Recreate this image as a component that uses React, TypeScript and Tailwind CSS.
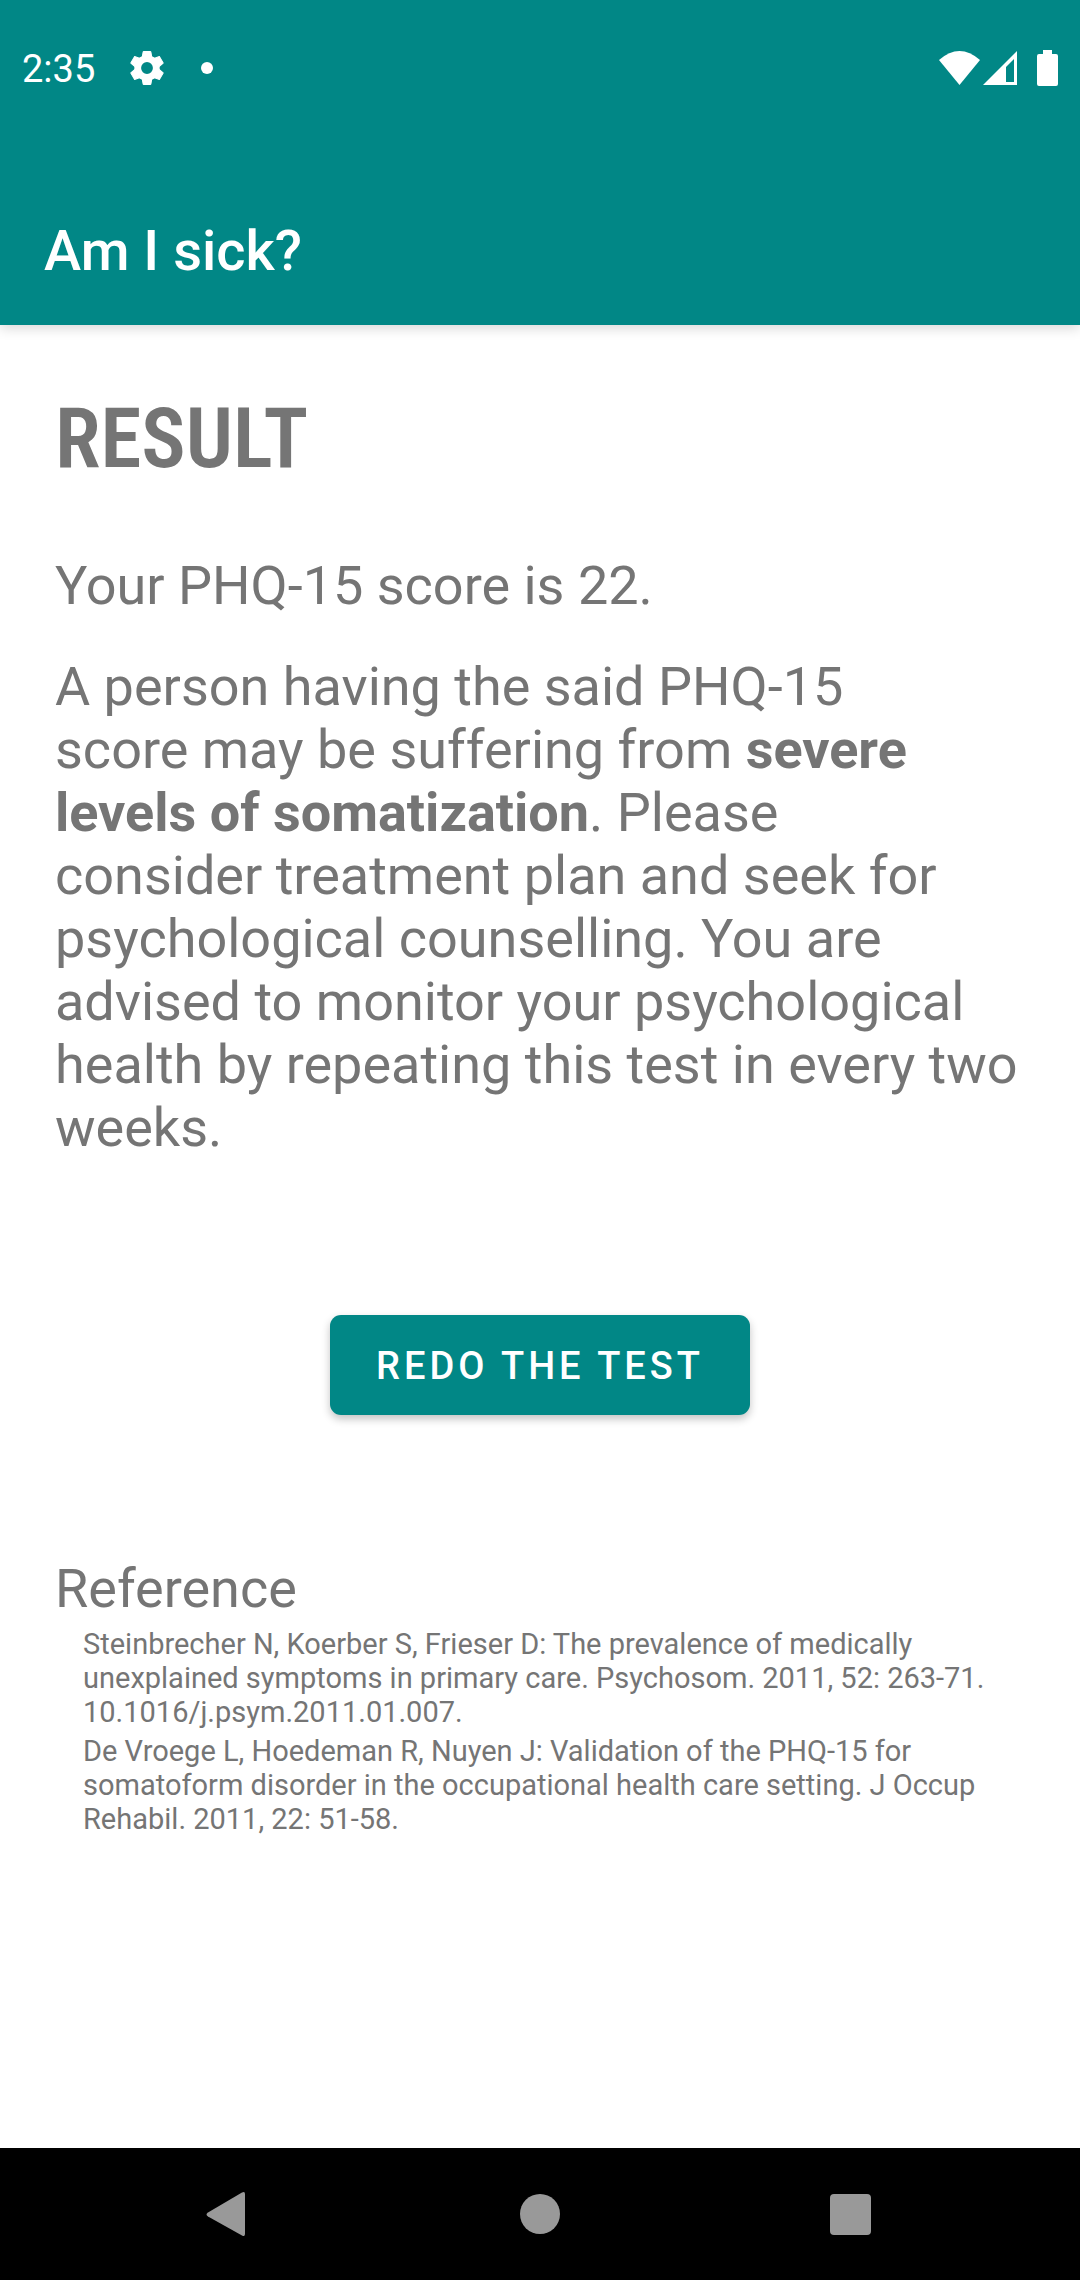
const gearTeeth = [0, 60, 120, 180, 240, 300]

export default function App() {
  return (
    <div className="flex min-h-screen flex-col bg-white font-[Roboto,sans-serif] text-[#757575]">
      <header className="bg-[#018786] text-white shadow-[0_3px_12px_rgba(0,0,0,0.16)]">
        <div className="flex h-[136px] items-center justify-between px-[22px]">
          <div className="flex items-center">
            <span className="pt-0.5 text-[38px] leading-[48px]">2:35</span>
            <svg className="ml-8 size-10" viewBox="0 0 40 40" fill="currentColor" aria-label="Settings">
              <circle cx="20" cy="20" r="9.300" fill="none" stroke="currentColor" strokeWidth="6.800" />
              {gearTeeth.map((angle) => (
                <path key={angle} d="M16.200 3.500H23.800L25.200 11.500H14.800Z" stroke="currentColor" strokeWidth="1" strokeLinejoin="round" transform={`rotate(${angle} 20 20)`} />
              ))}
            </svg>
            <span className="ml-[34px] size-3 rounded-full bg-white" />
          </div>
          <div className="flex items-center">
            <svg className="h-[34px] w-[41px]" viewBox="0 0 41 34" fill="currentColor" aria-label="Wi-Fi"><path d="M0 9Q20.500-9 41 9L20.500 34Z" /></svg>
            <svg className="ml-[3px] size-[34px]" viewBox="0 0 34 34" fill="currentColor" aria-label="Signal"><path fillRule="evenodd" d="M34 0V34H0ZM31 8L23 16V31H31Z" /></svg>
            <svg className="ml-5 h-9 w-[21px]" viewBox="0 0 21 36" fill="currentColor" aria-label="Battery"><path d="M6 0h9v4h4q2 0 2 2v28q0 2-2 2H2q-2 0-2-2V6q0-2 2-2h4Z" /></svg>
          </div>
        </div>
        <h1 className="px-11 pt-[79px] pb-[38px] text-[56px] leading-[72px] font-medium">Am I sick?</h1>
      </header>
      <main className="flex-1 px-[55px] pt-[66px]">
        <h2 className="font-['Roboto_Condensed',Roboto,sans-serif] text-[83px] leading-[96px] font-semibold">RESULT</h2>
        <p className="mt-[67px] text-[54px] leading-[63px]">Your PHQ-15 score is 22.</p>
        <p className="mt-[38px] text-[54px] leading-[63px]">
          A person having the said PHQ-15<br />
          score may be suffering from <b>severe levels of somatization</b>. Please<br />
          consider treatment plan and seek for psychological counselling. You are advised to monitor your psychological health by repeating this test in every two weeks.
        </p>
        <div className="mt-[156px] flex justify-center">
          <button className="h-[100px] rounded-[11px] bg-[#018786] px-[46px] pt-0.5 text-[38px] font-medium tracking-[4px] text-white shadow-[0_4px_8px_rgba(0,0,0,0.24)]">REDO THE TEST</button>
        </div>
        <h3 className="mt-[142px] text-[54px] leading-[63px]">Reference</h3>
        <div className="mt-[7px] px-7 text-[29px] leading-[34px]">
          <p>Steinbrecher N, Koerber S, Frieser D: The prevalence of medically unexplained symptoms in primary care. Psychosom. 2011, 52: 263-71. 10.1016/j.psym.2011.01.007.</p>
          <p className="mt-[5px]">De Vroege L, Hoedeman R, Nuyen J: Validation of the PHQ-15 for somatoform disorder in the occupational health care setting. J Occup Rehabil. 2011, 22: 51-58.</p>
        </div>
      </main>
      <nav className="grid h-[132px] grid-cols-3 bg-black px-[74px] text-[#999]">
        <button aria-label="Back" className="flex items-center justify-center">
          <svg className="size-12" viewBox="0 0 48 48" fill="currentColor"><path d="M3 22.500 37 2.500Q40 1 40 4V44Q40 47 37 45.500L3 26.500Q0 24.500 3 22.500Z" /></svg>
        </button>
        <button aria-label="Home" className="flex items-center justify-center">
          <span className="size-10 rounded-full bg-[#999]" />
        </button>
        <button aria-label="Recent apps" className="flex items-center justify-center">
          <span className="size-[41px] rounded-[4px] bg-[#999]" />
        </button>
      </nav>
    </div>
  )
}
